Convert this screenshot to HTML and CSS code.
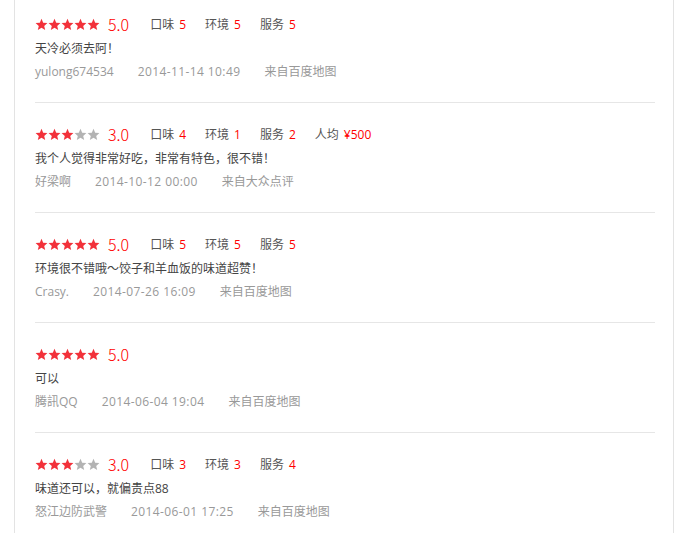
FILE: index.html
```html
<!DOCTYPE html>
<html lang="zh-CN">
<head>
    <meta charset="UTF-8">
    <title>评论列表</title>
    <link rel="stylesheet" href="styles.css">
</head>
<body>

    <div class="panel">
        <ul class="review-list" id="review-list">
        </ul>
    </div>

    <svg width="0" height="0" class="defs">
        <symbol id="star" viewBox="0 0 24 24">
            <path d="M12 1.5l3.1 7.2 7.8.7-5.9 5.2 1.8 7.7L12 18.2l-6.8 4.1 1.8-7.7-5.9-5.2 7.8-.7z"/>
        </symbol>
    </svg>

    <script>
        const reviews = [
            { score: 5, taste: 5, env: 5, service: 5, text: '天冷必须去阿！', user: 'yulong674534', time: '2014-11-14 10:49', from: '来自百度地图' },
            { score: 3, taste: 4, env: 1, service: 2, price: '¥500', text: '我个人觉得非常好吃，非常有特色，很不错！', user: '好梁啊', time: '2014-10-12 00:00', from: '来自大众点评' },
            { score: 5, taste: 5, env: 5, service: 5, text: '环境很不错哦～饺子和羊血饭的味道超赞！', user: 'Crasy.', time: '2014-07-26 16:09', from: '来自百度地图' },
            { score: 5, text: '可以', user: '腾訊QQ', time: '2014-06-04 19:04', from: '来自百度地图' },
            { score: 3, taste: 3, env: 3, service: 4, text: '味道还可以，就偏贵点88', user: '怒江边防武警', time: '2014-06-01 17:25', from: '来自百度地图' }
        ];

        // Build the star icons for a score
        function starsHtml(score) {
            let html = '';
            for (let i = 1; i <= 5; i++) {
                const cls = i <= score ? 'star on' : 'star';
                html += `<svg class="${cls}"><use href="#star"></use></svg>`;
            }
            return html;
        }

        function itemHtml(label, value) {
            if (value === undefined) return '';
            return `<span class="rate-item">${label}<em>${value}</em></span>`;
        }

        const list = document.getElementById('review-list');
        reviews.forEach((r) => {
            const li = document.createElement('li');
            li.className = 'review';
            li.innerHTML = `
                <div class="rating">
                    <span class="stars">${starsHtml(r.score)}</span>
                    <span class="score">${r.score.toFixed(1)}</span>
                    ${itemHtml('口味', r.taste)}
                    ${itemHtml('环境', r.env)}
                    ${itemHtml('服务', r.service)}
                    ${itemHtml('人均', r.price)}
                </div>
                <p class="content">${r.text}</p>
                <div class="meta">
                    <span class="user">${r.user}</span>
                    <span class="time">${r.time}</span>
                    <span>${r.from}</span>
                </div>`;
            list.appendChild(li);
        });
    </script>

</body>
</html>
```

FILE: styles.css
```css
body {
    font-family: "Open Sans", "Noto Sans CJK SC", sans-serif;
    font-size: 12px;
    color: #333;
    background-color: #fff;
    margin: 0;
    padding: 0;
}
.defs {
    position: absolute;
}
.panel {
    width: 658px;
    margin: 0 14px;
    min-height: 533px;
    border-left: 1px solid #e3e3e3;
    border-right: 1px solid #e3e3e3;
}
.review-list {
    list-style-type: none;
    margin: 0;
    padding: 0 18px 0 20px;
}
.review {
    padding: 22px 0 20px;
    border-bottom: 1px solid #e6e6e6;
}
.review:first-child {
    padding-top: 15px;
}
.rating {
    display: flex;
    align-items: center;
    height: 18px;
}
.stars {
    display: flex;
    margin-right: 8px;
}
.star {
    width: 13px;
    height: 13px;
    fill: #b3b3b3;
}
.star.on {
    fill: #f2313a;
}
.score {
    font-family: "Noto Sans CJK SC", sans-serif;
    font-size: 16px;
    color: #f00;
    margin-right: 21px;
    font-weight: 300;
}
.rate-item {
    color: #555;
    margin-right: 19px;
}
.rate-item em {
    font-style: normal;
    color: #f00;
    margin-left: 5px;
}
.content {
    margin: 6px 0 0;
    line-height: 20px;
    color: #444;
}
.meta {
    margin-top: 3px;
    line-height: 20px;
    color: #999;
    display: flex;
    gap: 24px;
}
.meta .time {
    letter-spacing: 0.4px;
}
```
